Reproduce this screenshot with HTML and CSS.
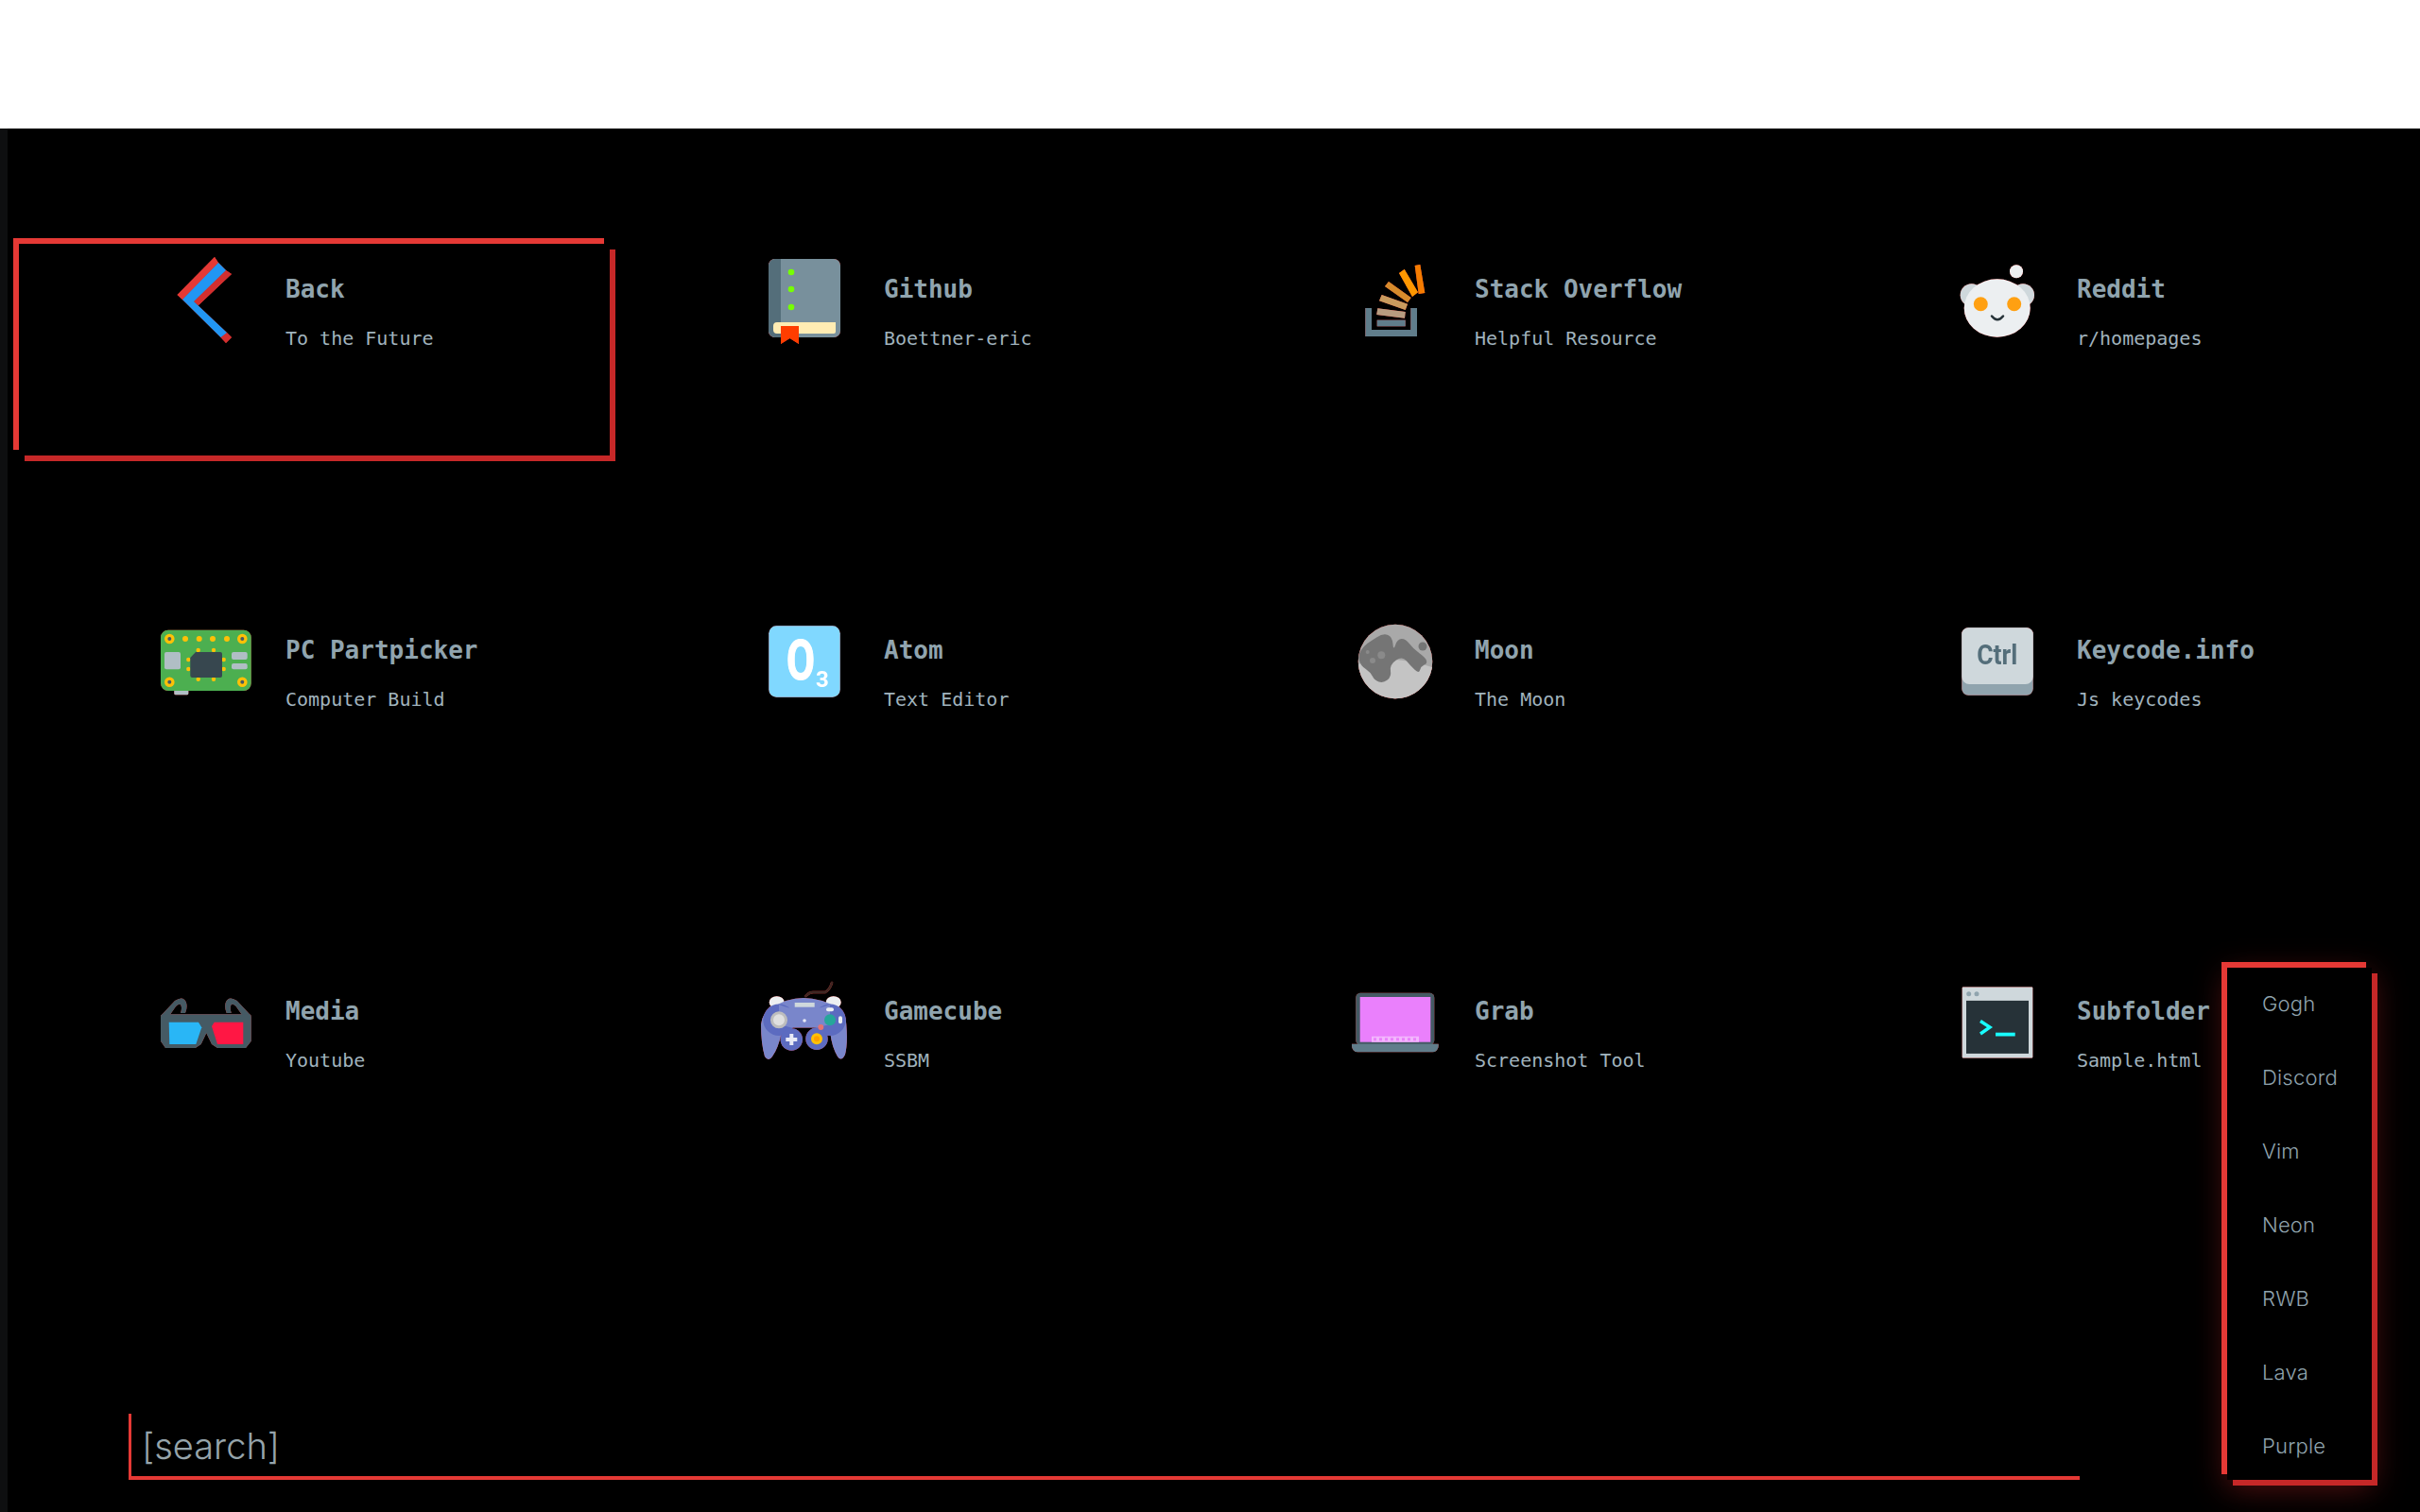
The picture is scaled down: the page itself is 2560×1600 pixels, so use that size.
FILE: index.html
```html
<!DOCTYPE html>
<html lang="en">
<head>
<meta charset="utf-8">
<title>Homepage</title>
<link rel="stylesheet" href="styles.css">
</head>
<body>
<header class="topbar"></header>
<main class="page">
  <section class="grid">
    <a class="item active">
      <svg class="icon" viewBox="0 0 96 96">
        <polygon points="57,2 61,8 23,47 17.5,42" fill="#e53935"/>
        <polygon points="75,20 69,16 35,49 40,53" fill="#d32f2f"/>
        <polygon points="70,82 75,87 69,93 63.5,87" fill="#d32f2f"/>
        <polygon points="61,8 69,16 35,49 70,82 63.5,87 23,47" fill="#2196f3"/>
      </svg>
      <div class="text"><div class="title">Back</div><div class="sub">To the Future</div></div>
    </a>
    <a class="item">
      <svg class="icon" viewBox="0 0 96 96">
        <rect x="11" y="4" width="76" height="83" rx="7" fill="#78909c"/>
        <path d="M18 4H24V87H18A7 7 0 0 1 11 80V11A7 7 0 0 1 18 4Z" fill="#546e7a"/>
        <circle cx="35" cy="18" r="3.3" fill="#76ff03"/>
        <circle cx="35" cy="36" r="3.3" fill="#76ff03"/>
        <circle cx="35" cy="55" r="3.3" fill="#76ff03"/>
        <path d="M87 71H20A4 4 0 0 0 16 75V79A4 4 0 0 0 20 83H80A2 2 0 0 0 82 81V71Z" fill="#ffecb3"/>
        <polygon points="24,75 43,75 43,94 33.5,88 24,94" fill="#ff3d00"/>
      </svg>
      <div class="text"><div class="title">Github</div><div class="sub">Boettner-eric</div></div>
    </a>
    <a class="item">
      <svg class="icon" viewBox="0 0 96 96">
        <path d="M17.300 56H24V79H65.300V56H72V86H17.300Z" fill="#607d8b"/>
        <rect x="29.700" y="68.700" width="30" height="6.600" fill="#607d8b"/>
        <polygon points="30.300,56.300 59.700,60 59,66.700 29.300,63" fill="#b79c80"/>
        <polygon points="34.700,42 62,51.700 59.700,58 32,48.300" fill="#c89b5e"/>
        <polygon points="42,28 65.700,45 62,50 38,33" fill="#d68b2c"/>
        <polygon points="58.700,15 73,39.300 67,44 53,19" fill="#ff9800"/>
        <polygon points="75.300,10 80.300,40 73.700,41 69.700,11" fill="#f57c00"/>
      </svg>
      <div class="text"><div class="title">Stack Overflow</div><div class="sub">Helpful Resource</div></div>
    </a>
    <a class="item">
      <svg class="icon" viewBox="0 0 96 96">
        <circle cx="21.700" cy="42.300" r="12" fill="#cfd8dc"/>
        <circle cx="76" cy="42.300" r="12" fill="#cfd8dc"/>
        <ellipse cx="48.700" cy="56" rx="35" ry="30.700" fill="#eceff1"/>
        <circle cx="69" cy="17.300" r="7" fill="#eceff1"/>
        <circle cx="31.300" cy="51.700" r="7.500" fill="#ffa012"/>
        <circle cx="66.700" cy="51.700" r="7.500" fill="#ffa012"/>
        <path d="M43 64.500Q49 72 55 64.500" fill="none" stroke="#263238" stroke-width="2.500" stroke-linecap="round"/>
      </svg>
      <div class="text"><div class="title">Reddit</div><div class="sub">r/homepages</div></div>
    </a>

    <a class="item">
      <svg class="icon" viewBox="0 0 96 96">
        <rect x="14.300" y="76" width="15" height="7.300" rx="1.500" fill="#b0bec5"/>
        <rect x="0" y="14.700" width="95.700" height="64.300" rx="8" fill="#4caf50"/>
        <g fill="#ffc107">
          <circle cx="9.300" cy="24" r="5.300"/><circle cx="86.300" cy="24" r="5.300"/>
          <circle cx="9.300" cy="69.700" r="5.300"/><circle cx="86.300" cy="69.700" r="5.300"/>
          <circle cx="26" cy="24" r="3"/><circle cx="40.700" cy="24" r="3"/><circle cx="55" cy="24" r="3"/><circle cx="70" cy="24" r="3"/>
          <circle cx="39.700" cy="36" r="2.200"/><circle cx="56" cy="36" r="2.200"/>
          <circle cx="39.700" cy="66.700" r="2.200"/><circle cx="56" cy="66.700" r="2.200"/>
          <circle cx="29.300" cy="46" r="2.200"/><circle cx="29.300" cy="56" r="2.200"/>
          <circle cx="66.700" cy="46" r="2.200"/><circle cx="66.700" cy="56" r="2.200"/>
        </g>
        <g fill="#455a64">
          <circle cx="9.300" cy="24" r="2"/><circle cx="86.300" cy="24" r="2"/>
          <circle cx="9.300" cy="69.700" r="2"/><circle cx="86.300" cy="69.700" r="2"/>
        </g>
        <path d="M37 38H63A2 2 0 0 1 65 40V63A2 2 0 0 1 63 65H33.300A2 2 0 0 1 31.300 63V44Z" fill="#37474f"/>
        <g fill="#b0bec5">
          <rect x="4" y="38" width="17" height="18.300" rx="2"/>
          <rect x="75" y="38" width="16.700" height="8" rx="2"/>
          <rect x="75" y="50" width="16.700" height="6.300" rx="2"/>
        </g>
      </svg>
      <div class="text"><div class="title">PC Partpicker</div><div class="sub">Computer Build</div></div>
    </a>
    <a class="item">
      <svg class="icon" viewBox="0 0 96 96">
        <rect x="11.300" y="10.300" width="75.400" height="75.400" rx="8" fill="#80d8ff"/>
        <text x="45" y="67.300" textLength="30" lengthAdjust="spacingAndGlyphs" class="glyph-o">O</text>
        <text x="68" y="75" class="glyph-3">3</text>
      </svg>
      <div class="text"><div class="title">Atom</div><div class="sub">Text Editor</div></div>
    </a>
    <a class="item">
      <svg class="icon" viewBox="0 0 96 96">
        <circle cx="49" cy="48" r="39.300" fill="#a9a9a9"/>
        <path d="M10 51A39.300 39.300 0 0 0 88 54Q70 48 49 46T10 51Z" fill="#c4c4c4"/>
        <path d="M29.650 22.150Q36.300 18 41.150 20Q46 22 46.500 29.500Q47 37 49.150 30.500Q51.300 24 55.650 24Q60 24 64 29.350Q68 34.700 74.500 39.350Q81 44 82 47Q83 50 79.650 51.500Q76.300 53 75.150 57Q74 61 69.350 56.500Q64.700 52 60.500 47Q56.300 42 49.650 46.650Q43 51.300 44 57.650Q45 64 40.650 67.500Q36.300 71 31.650 69.500Q27 68 25 63.850Q23 59.700 17.500 55.850Q12 52 10.750 46.500Q9.500 41 12.900 36Q16.300 31 19.650 28.650Q23 26.300 29.650 22.150Z" fill="#757575"/>
        <circle cx="78" cy="32" r="4.500" fill="#757575"/>
        <circle cx="34.300" cy="41.300" r="4" fill="#8a8a8a"/>
        <circle cx="25" cy="47" r="3" fill="#8a8a8a"/>
        <circle cx="19.700" cy="38" r="2" fill="#8a8a8a"/>
      </svg>
      <div class="text"><div class="title">Moon</div><div class="sub">The Moon</div></div>
    </a>
    <a class="item">
      <svg class="icon" viewBox="0 0 96 96">
        <rect x="11.300" y="12.300" width="75.400" height="71.400" rx="7" fill="#90a4ae"/>
        <path d="M18.300 12.300H79.700A7 7 0 0 1 86.700 19.300V64A8 8 0 0 1 78.700 72H19.300A8 8 0 0 1 11.300 64V19.300A7 7 0 0 1 18.300 12.300Z" fill="#cfd8dc"/>
        <text x="48.700" y="51.300" textLength="43" lengthAdjust="spacingAndGlyphs" class="glyph-ctrl">Ctrl</text>
      </svg>
      <div class="text"><div class="title">Keycode.info</div><div class="sub">Js keycodes</div></div>
    </a>

    <a class="item">
      <svg class="icon" viewBox="0 0 96 96">
        <path d="M0 41L15 25Q24 19 27 27Q28.500 32 26 38L21 38Q23 32 21 29Q19 28 16 31L9 41Z" fill="#455a64"/>
        <path d="M95.700 41L80.700 25Q71.700 19 68.700 27Q67.200 32 69.700 38L74.700 38Q72.700 32 74.700 29Q76.700 28 79.700 31L86.700 41Z" fill="#455a64"/>
        <path d="M3 39.300H92.700A3 3 0 0 1 95.700 42.300V67.700L90 75H60L54 71 48.300 59.300 42.700 71 36.700 75H5L0 67.700V42.300A3 3 0 0 1 3 39.300Z" fill="#455a64"/>
        <polygon points="8.700,47.700 40,47.700 43.300,53.300 37.300,71 9.300,71" fill="#29b6f6"/>
        <polygon points="54,52 56.700,47.700 87.300,47.700 87.300,71 60,71" fill="#ff1744"/>
      </svg>
      <div class="text"><div class="title">Media</div><div class="sub">Youtube</div></div>
    </a>
    <a class="item">
      <svg class="icon" viewBox="0 0 96 96">
        <path d="M50.300 20Q54 16 58 16T71 16Q76 13 78 6" fill="none" stroke="#3e2723" stroke-width="2.500" stroke-linecap="round"/>
        <ellipse cx="19.700" cy="26.700" rx="8" ry="6.500" fill="#eceff1"/>
        <ellipse cx="79.700" cy="26.700" rx="8" ry="6.500" fill="#eceff1"/>
        <path d="M14.700 32.700Q30 22 48 22T84.700 32.700Q93.300 38 93.300 50Q95 70 92 82Q88 90 84 84Q78 74 76.300 59.300L70 53H28L24.700 59.300Q21 76 15 84Q11 90 7 84Q3 70 3 50Q4 38 14.700 32.700Z" fill="#7986cb"/>
        <g fill="#5c6bc0">
          <circle cx="22" cy="45.300" r="16.700"/>
          <circle cx="76" cy="45.300" r="16.700"/>
          <circle cx="35.300" cy="66" r="11.700"/>
          <circle cx="62" cy="65.300" r="11.700"/>
        </g>
        <path d="M22 29Q48 40 76 29V50L62 53.500H35.300L22 50Z" fill="#7986cb"/>
        <rect x="38.700" y="27" width="21" height="4.700" fill="#cfd8dc"/>
        <circle cx="49" cy="46" r="1.800" fill="#e8eaf6"/>
        <circle cx="22" cy="45.300" r="9" fill="#bdbdbd"/>
        <circle cx="22" cy="45.300" r="6" fill="#e0e0e0"/>
        <path d="M33.300 60H37.300V64H41.300V68H37.300V72H33.300V68H29.300V64H33.300Z" fill="#e8eaf6"/>
        <circle cx="62" cy="65.300" r="6" fill="#ffc107"/>
        <circle cx="62" cy="65.300" r="3" fill="#ffa000"/>
        <circle cx="76" cy="45.300" r="6" fill="#26a69a"/>
        <circle cx="66.300" cy="53" r="3" fill="#e57373"/>
        <rect x="72" y="32.300" width="8" height="4" rx="2" fill="#eceff1"/>
        <rect x="85" y="41.300" width="4" height="8" rx="2" fill="#eceff1"/>
      </svg>
      <div class="text"><div class="title">Gamecube</div><div class="sub">SSBM</div></div>
    </a>
    <a class="item">
      <svg class="icon" viewBox="0 0 96 96">
        <rect x="7.300" y="16.700" width="83" height="55" rx="5" fill="#455a64"/>
        <rect x="11.700" y="21" width="74.600" height="47.700" fill="#ea80fc"/>
        <rect x="24" y="62.700" width="50" height="6" fill="#f3b6fd"/>
        <path d="M26 65.700H72" stroke="#ea80fc" stroke-width="3" stroke-dasharray="3 3"/>
        <path d="M3 70.700H94.700V73A6.300 6.300 0 0 1 88.400 79.300H9.300A6.300 6.300 0 0 1 3 73Z" fill="#607d8b"/>
      </svg>
      <div class="text"><div class="title">Grab</div><div class="sub">Screenshot Tool</div></div>
    </a>
    <a class="item">
      <svg class="icon" viewBox="0 0 96 96">
        <rect x="11.700" y="10.600" width="74.600" height="74.800" rx="1" fill="#cfd8dc"/>
        <rect x="16" y="24.900" width="66" height="56" fill="#263238"/>
        <circle cx="18.700" cy="17.700" r="2.500" fill="#90a4ae"/>
        <circle cx="27" cy="17.700" r="2.500" fill="#90a4ae"/>
        <polyline points="31,46.500 41,53 31,60" fill="none" stroke="#18ffff" stroke-width="3.400"/>
        <rect x="47" y="58.700" width="20.700" height="3.800" fill="#18ffff"/>
      </svg>
      <div class="text"><div class="title">Subfolder</div><div class="sub">Sample.html</div></div>
    </a>
  </section>

  <div class="search">[search]</div>

  <nav class="themes">
    <ul class="theme-list">
      <li>Gogh</li>
      <li>Discord</li>
      <li>Vim</li>
      <li>Neon</li>
      <li>RWB</li>
      <li>Lava</li>
      <li>Purple</li>
    </ul>
  </nav>
</main>
</body>
</html>
```
FILE: styles.css
```css
*, *::before, *::after { box-sizing: border-box; }

html, body {
  margin: 0;
  padding: 0;
  height: 1600px;
  overflow: hidden;
  background: #000;
}

.topbar {
  height: 136px;
  background: #fff;
}

.page {
  position: relative;
  height: 1464px;
  border-left: 8px solid #0e0f10;
  padding-top: 116px;
  background: #000;
}

.grid {
  margin-left: 6px;
  display: grid;
  grid-template-columns: repeat(4, 637px);
  grid-auto-rows: 236px;
  row-gap: 146px;
}

.item {
  position: relative;
  display: flex;
  align-items: flex-start;
  gap: 36px;
  padding-top: 18px;
}

.item:nth-child(4n+1) { padding-left: 156px; }
.item:nth-child(4n+2) { padding-left: 151px; gap: 37px; }
.item:nth-child(4n+3) { padding-left: 139px; gap: 37px; }
.item:nth-child(4n)   { padding-left: 139px; gap: 37px; }

.active::before,
.themes::before {
  content: "";
  position: absolute;
  top: 0;
  left: 0;
  width: calc(100% - 12px);
  height: calc(100% - 12px);
  border-top: 6px solid #e53935;
  border-left: 6px solid #e53935;
  z-index: 1;
}

.active::after,
.themes::after {
  content: "";
  position: absolute;
  right: 0;
  bottom: 0;
  width: calc(100% - 12px);
  height: calc(100% - 12px);
  border-right: 6px solid #c62828;
  border-bottom: 6px solid #c62828;
  z-index: 1;
}

.icon {
  flex: none;
  width: 96px;
  height: 96px;
  overflow: visible;
  filter: drop-shadow(0 0 0.6px #e53935);
}

.glyph-o {
  font-family: Roboto, sans-serif;
  font-weight: 700;
  font-size: 60px;
  fill: #fff;
  stroke: #fff;
  stroke-width: 1.2px;
  text-anchor: middle;
}

.glyph-3 {
  font-family: Roboto, sans-serif;
  font-weight: 700;
  font-size: 24px;
  fill: #fff;
  text-anchor: middle;
}

.glyph-ctrl {
  font-family: Roboto, sans-serif;
  font-weight: 700;
  font-size: 29px;
  fill: #546e7a;
  text-anchor: middle;
}

.text {
  padding-top: 21px;
  white-space: nowrap;
  font-family: "DejaVu Sans Mono", monospace;
  position: relative;
  z-index: 2;
}

.title {
  font-size: 26px;
  line-height: 30px;
  font-weight: 700;
  color: #90a4ae;
}

.sub {
  margin-top: 22px;
  font-size: 20px;
  line-height: 30px;
  color: #a0b3bd;
}

.search {
  margin: 244px 0 0 128px;
  width: 2064px;
  height: 70px;
  padding: 11px 0 0 11px;
  border-left: 3px solid #e53935;
  border-bottom: 4px solid #e53935;
  font-family: Inter, sans-serif;
  font-weight: 300;
  font-size: 38px;
  line-height: 46px;
  color: #96a4ab;
}

.themes {
  position: absolute;
  right: 45px;
  bottom: 28px;
  width: 165px;
  height: 554px;
}

.theme-list {
  list-style: none;
  margin: 6px;
  padding: 6px 0 0 37px;
  height: 542px;
  background: #000;
  box-shadow: 0 8px 32px rgba(198, 40, 40, 0.45);
  font-family: Inter, sans-serif;
  font-weight: 300;
  font-size: 22px;
  letter-spacing: 0.2px;
  color: #90a4ae;
}

.theme-list li {
  height: 78px;
  line-height: 64px;
}
```
